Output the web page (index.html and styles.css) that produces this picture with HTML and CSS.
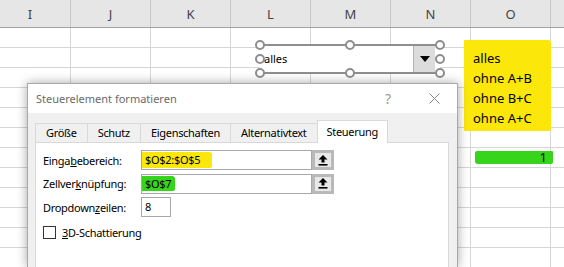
FILE: index.html
```html
<!DOCTYPE html>
<html>
<head>
<meta charset="utf-8">
<link rel="stylesheet" href="styles.css">
</head>
<body>

<div class="sheet">
    <div class="colheads">
        <div class="colhead first">I</div>
        <div class="colhead">J</div>
        <div class="colhead">K</div>
        <div class="colhead">L</div>
        <div class="colhead">M</div>
        <div class="colhead">N</div>
        <div class="colhead">O</div>
        <div class="colhead last"></div>
    </div>
    <div class="cells">
        <div class="mark-yellow"></div>
        <div class="cell o2">alles</div>
        <div class="cell o3">ohne A+B</div>
        <div class="cell o4">ohne B+C</div>
        <div class="cell o5">ohne A+C</div>
        <div class="cell o7"><span class="mark-green">1</span></div>
    </div>
</div>

<!-- selected form control (combo box) -->
<div class="combo">
    <div class="combo-text">alles</div>
    <div class="combo-btn">
        <svg width="10" height="6" viewBox="0 0 10 6"><polygon points="0,0 10,0 5,6" fill="#000"/></svg>
    </div>
    <span class="handle h-tl"></span>
    <span class="handle h-tm"></span>
    <span class="handle h-tr"></span>
    <span class="handle h-ml"></span>
    <span class="handle h-mr"></span>
    <span class="handle h-bl"></span>
    <span class="handle h-bm"></span>
    <span class="handle h-br"></span>
</div>

<div class="dialog">
    <div class="titlebar">
        <div class="title">Steuerelement formatieren</div>
        <div class="tbtn help">?</div>
        <div class="tbtn close">
            <svg width="11" height="11" viewBox="0 0 11 11"><path d="M0.5 0.5 L10.5 10.5 M10.5 0.5 L0.5 10.5" stroke="#8a8a8a" stroke-width="1"/></svg>
        </div>
    </div>
    <div class="dlg-body">
        <div class="tabs">
            <div class="tab">Größe</div>
            <div class="tab">Schutz</div>
            <div class="tab">Eigenschaften</div>
            <div class="tab">Alternativtext</div>
            <div class="tab active">Steuerung</div>
        </div>
        <div class="panel">
            <div class="form">
                <div class="label">Einga<u>b</u>ebereich:</div>
                <div class="field"><span class="hl-yellow">$O$2:$O$5</span></div>
                <div class="pick">
                    <svg width="10" height="11" viewBox="0 0 10 11"><path d="M5 0 L9.5 4.5 H6.5 V7.5 H3.5 V4.5 H0.5 Z" fill="#000"/><rect x="0.5" y="9" width="9" height="1.6" fill="#000"/></svg>
                </div>

                <div class="label">Zellver<u>k</u>nüpfung:</div>
                <div class="field"><span class="hl-green">$O$7</span></div>
                <div class="pick">
                    <svg width="10" height="11" viewBox="0 0 10 11"><path d="M5 0 L9.5 4.5 H6.5 V7.5 H3.5 V4.5 H0.5 Z" fill="#000"/><rect x="0.5" y="9" width="9" height="1.6" fill="#000"/></svg>
                </div>

                <div class="label">Dropdown<u>z</u>eilen:</div>
                <div class="field small">8</div>
            </div>
            <div class="check-row">
                <span class="checkbox"></span>
                <span><u>3</u>D-Schattierung</span>
            </div>
        </div>
    </div>
</div>

</body>
</html>
```

FILE: styles.css
```css
body {
    margin: 0;
    width: 564px;
    height: 267px;
    overflow: hidden;
    position: relative;
    background-color: #fff;
    font-family: "Noto Sans", sans-serif;
}

/* spreadsheet */
.sheet {
    width: 564px;
    height: 267px;
    overflow: hidden;
}

.colheads {
    display: flex;
    height: 27px;
    background-color: #e6e6e6;
    border-bottom: 1px solid #a3a3a3;
}

.colhead {
    width: 80px;
    flex: none;
    box-sizing: border-box;
    border-right: 1px solid #c9c9c9;
    display: flex;
    align-items: flex-end;
    justify-content: center;
    padding-bottom: 4px;
    font-size: 13px;
    color: #444;
}

.colhead.first {
    width: 71px;
    padding-right: 10px;
}

.colhead.last {
    width: 13px;
    border-right: none;
}

.cells {
    display: grid;
    grid-template-columns: 71px repeat(6, 80px) 13px;
    grid-template-rows: repeat(12, 20px);
    background-image:
        linear-gradient(to right, transparent 79px, #d6d6d6 79px),
        linear-gradient(to bottom, transparent 19px, #d6d6d6 19px);
    background-size: 80px 20px;
    background-position: -9px 0, 0 0;
}

.cell {
    position: relative;
    z-index: 1;
    font-size: 13px;
    line-height: 20px;
    padding-left: 2px;
    color: #000;
}

.o2 { grid-column: 7; grid-row: 2; }
.o3 { grid-column: 7; grid-row: 3; }
.o4 { grid-column: 7; grid-row: 4; }
.o5 { grid-column: 7; grid-row: 5; }
.o7 { grid-column: 7; grid-row: 7; padding: 3px 0 3px 4px; }

.mark-yellow {
    grid-column: 7;
    grid-row: 2 / 6;
    margin: -8px 0 -3px -7px;
    background-color: #fbe80a;
    border-radius: 1px 3px 2px 1px;
}

.mark-green {
    display: block;
    height: 13px;
    line-height: 13px;
    margin-right: -2px;
    padding-right: 6px;
    text-align: right;
    background-color: #37d41c;
    border-radius: 2px 1px 2px 3px;
}

/* combo box, selected */
.combo {
    position: absolute;
    left: 260px;
    top: 44px;
    width: 180px;
    height: 30px;
    box-sizing: border-box;
    border-top: 2px solid #8e8e8e;
    border-bottom: 2px solid #8e8e8e;
    background-color: #fff;
    display: flex;
    z-index: 2;
}

.combo-text {
    flex: 1;
    padding-left: 4px;
    font-size: 11px;
    line-height: 26px;
    color: #000;
}

.combo-btn {
    width: 21px;
    margin-right: 5px;
    background-color: #dcdcdc;
    border-left: 1px solid #b4b4b4;
    display: flex;
    align-items: center;
    justify-content: center;
}

.handle {
    position: absolute;
    width: 10px;
    height: 10px;
    box-sizing: border-box;
    border: 2px solid #8e8e8e;
    border-radius: 50%;
    background-color: #fff;
    transform: translate(-50%, -50%);
}
.h-tl { left: 0; top: -1px; }
.h-tm { left: 50%; top: -1px; }
.h-tr { left: 100%; top: -1px; }
.h-ml { left: 0; top: 50%; }
.h-mr { left: 100%; top: 50%; }
.h-bl { left: 0; top: calc(100% + 1px); }
.h-bm { left: 50%; top: calc(100% + 1px); }
.h-br { left: 100%; top: calc(100% + 1px); }

/* dialog */
.dialog {
    position: absolute;
    left: 27px;
    top: 83px;
    width: 431px;
    height: 184px;
    overflow: hidden;
    box-sizing: border-box;
    background-color: #f0f0f0;
    border: 1px solid #a9a9a9;
    border-bottom: none;
    box-shadow: 0 0 10px rgba(0, 0, 0, 0.35);
    z-index: 3;
    font-size: 11px;
    letter-spacing: -0.3px;
    color: #000;
}

.titlebar {
    height: 29px;
    background-color: #fff;
    display: flex;
    align-items: center;
}

.title {
    flex: 1;
    padding-left: 8px;
    padding-bottom: 1px;
    color: #6a6a6a;
    letter-spacing: 0;
}

.tbtn {
    width: 46px;
    height: 29px;
    display: flex;
    align-items: center;
    justify-content: center;
}

.help {
    color: #9a9a9a;
    font-size: 14px;
}

.dlg-body {
    padding: 7px 8px 0 7px;
}

.tabs {
    display: flex;
    align-items: flex-end;
    height: 22px;
}

.tab {
    height: 19px;
    box-sizing: border-box;
    padding: 0 10px;
    margin-right: -1px;
    border: 1px solid #d9d9d9;
    border-bottom: none;
    background-color: #f0f0f0;
    line-height: 18px;
    color: #000;
}

.tab.active {
    height: 23px;
    margin-bottom: -1px;
    padding: 0 9px;
    background-color: #fff;
    position: relative;
    z-index: 1;
    line-height: 22px;
}

.panel {
    height: 125px;
    background-color: #fff;
    border: 1px solid #d9d9d9;
    border-bottom: none;
    padding: 7px 0 0 7px;
}

.form {
    display: grid;
    grid-template-columns: 98px 171px 22px;
    grid-auto-rows: 20px;
    row-gap: 3.5px;
    align-items: center;
}

.label {
    grid-column: 1;
}

.field {
    grid-column: 2;
    height: 20px;
    box-sizing: border-box;
    border: 1px solid #a8a8a8;
    padding-left: 3px;
    line-height: 18px;
}

.field.small {
    width: 30px;
}

.hl-yellow {
    display: inline-block;
    margin-left: -3px;
    padding: 0 12px 0 3px;
    background-color: #fbe80a;
    line-height: 16px;
    border-radius: 0 3px 2px 0;
}

.hl-green {
    display: inline-block;
    margin-left: -3px;
    padding: 0 4px 0 3px;
    background-color: #37d41c;
    line-height: 15px;
    border-radius: 0 3px 2px 0;
}

.pick {
    grid-column: 3;
    height: 20px;
    box-sizing: border-box;
    border: 3px solid #b9b9b9;
    background-color: #e8e8e8;
    display: flex;
    align-items: center;
    justify-content: center;
}

.check-row {
    display: flex;
    align-items: center;
    gap: 6px;
    margin-top: 8px;
}

.checkbox {
    width: 13px;
    height: 13px;
    box-sizing: border-box;
    border: 1px solid #333;
    background-color: #fff;
}
```
